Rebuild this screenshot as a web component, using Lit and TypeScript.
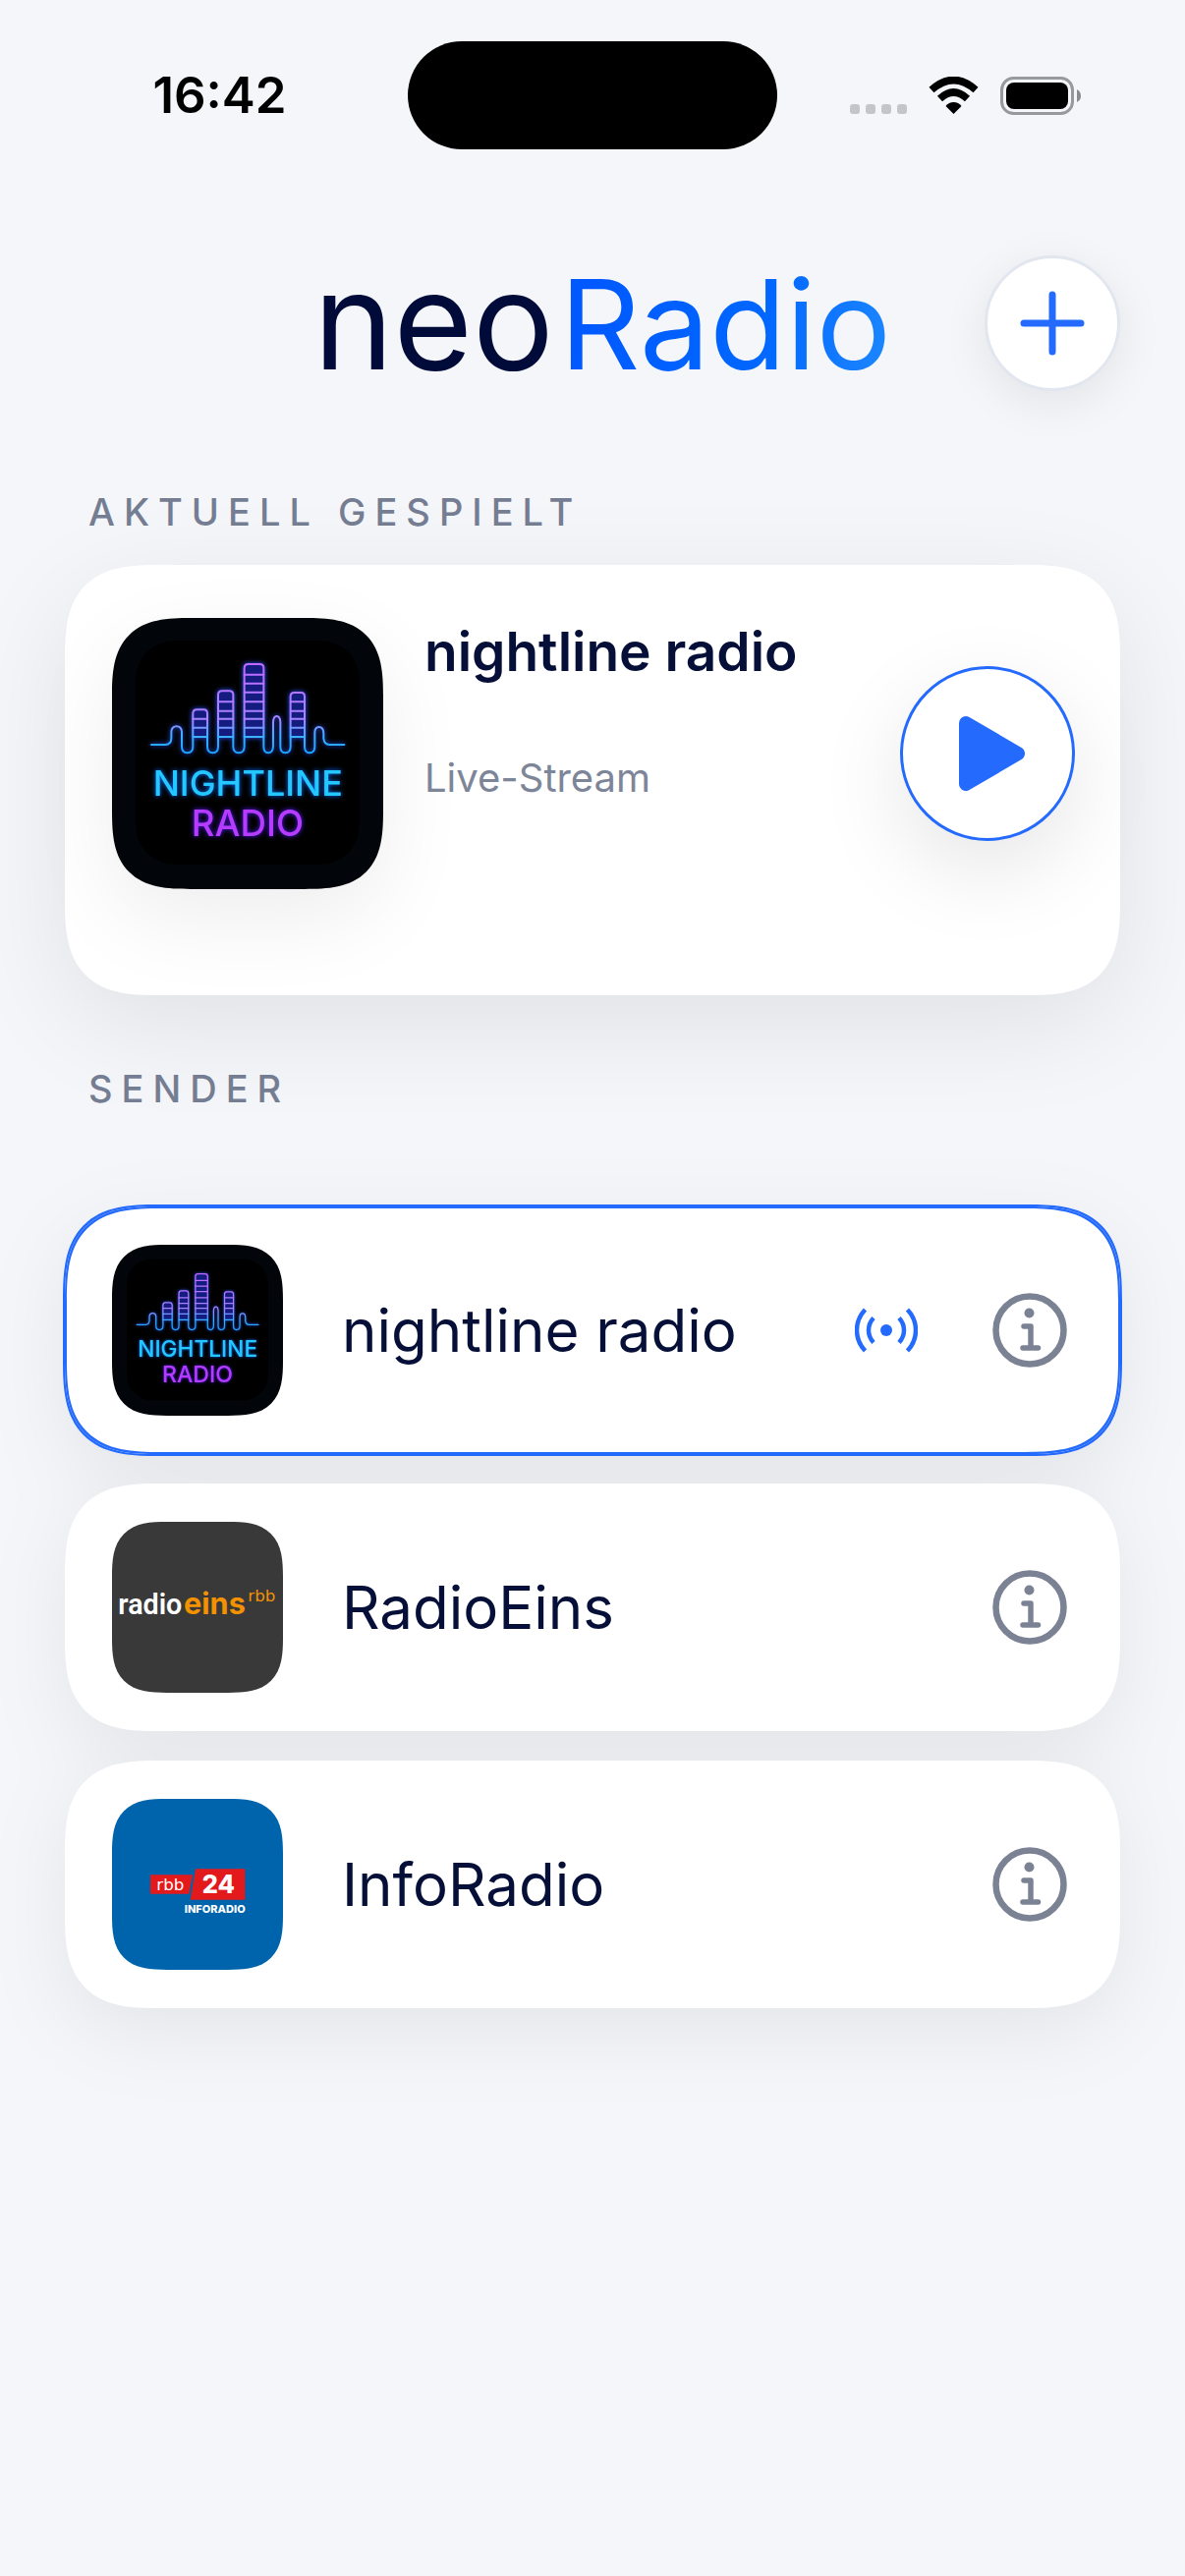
import { LitElement, html, css, svg, nothing } from 'lit';
import { customElement, property, state } from 'lit/decorators.js';
import { classMap } from 'lit/directives/class-map.js';

type ArtName = 'nightline' | 'radioeins' | 'inforadio';

interface Station {
  id: ArtName;
  name: string;
}

const STATIONS: Station[] = [
  { id: 'nightline', name: 'nightline radio' },
  { id: 'radioeins', name: 'RadioEins' },
  { id: 'inforadio', name: 'InfoRadio' },
];

// x, width and top of each striped equalizer bar
const BARS = [
  { x: 289, width: 44, top: 307 },
  { x: 366, width: 46, top: 250 },
  { x: 446, width: 59, top: 168 },
  { x: 587, width: 43, top: 255 },
];
const RUNGS = [200, 227, 254, 283, 311, 335, 362, 390];

/**
 * Cover art of a station, scales with its box
 */
@customElement('station-art')
export class StationArt extends LitElement {
  static styles = css`
    :host {
      display: block;
      overflow: hidden;
    }

    svg {
      display: block;
      width: 100%;
      height: 100%;
    }

    text {
      font-family: Inter, 'Liberation Sans', sans-serif;
    }

    .neon-blue {
      fill: #22c8ff;
      font-size: 108px;
      font-weight: 500;
      filter: drop-shadow(0 0 8px #0a6cff);
    }

    .neon-violet {
      fill: #b53cff;
      font-size: 110px;
      font-weight: 500;
      filter: drop-shadow(0 0 8px #5a1cff);
    }

    .wave {
      fill: none;
      stroke: url(#neon);
      stroke-width: 6;
      stroke-linecap: round;
    }

    .glow {
      filter: drop-shadow(0 0 8px #2a55ff);
    }

    .radio {
      fill: #fff;
      font-family: Roboto, 'Liberation Sans', sans-serif;
      font-size: 86px;
      font-weight: 600;
    }

    .eins {
      fill: #f39200;
      font-size: 92px;
      font-weight: 700;
    }

    .rbb {
      fill: #f39200;
      font-family: 'DejaVu Sans', sans-serif;
      font-size: 50px;
    }

    .white {
      fill: #fff;
    }

    .number {
      font-size: 76px;
      font-weight: 800;
    }

    .caption {
      font-size: 33px;
      font-weight: 800;
    }
  `;

  @property() name: ArtName = 'nightline';

  private _nightline() {
    return html`
      <svg viewBox="42 27 828 828" role="img" aria-label="nightline radio">
        <defs>
          <linearGradient id="neon" gradientUnits="userSpaceOnUse" x1="0" y1="168" x2="0" y2="430">
            <stop offset="0" stop-color="#c068ff" />
            <stop offset="0.65" stop-color="#a584ff" />
            <stop offset="0.85" stop-color="#38b0ff" />
            <stop offset="1" stop-color="#1ca4ff" />
          </linearGradient>
        </defs>
        <rect x="42" y="27" width="828" height="828" fill="#020509" />
        <rect x="114" y="96" width="684" height="684" rx="120" fill="#000" />
        <g class="glow">
          ${BARS.map(
            (bar) => svg`
              <rect x=${bar.x} y=${bar.top} width=${bar.width} height=${390 - bar.top} rx="10" fill="#151c80" />
              ${RUNGS.filter((y) => y > bar.top + 20).map(
                (y) => svg`<path class="wave" d="M${bar.x} ${y}h${bar.width}" />`
              )}
            `
          )}
          <path
            class="wave"
            d="M162 414H205Q222 414 223 395V375Q224 358 239 358Q254 358 255 375V420Q255 439 272 439Q289 439 289 420V320Q289 307 301 307H322Q333 307 333 320V420Q333 439 350 439Q366 439 366 420V262Q366 250 378 250H400Q412 250 412 262V420Q412 439 429 439Q446 439 446 420V180Q446 168 458 168H493Q505 168 505 180V420Q505 439 519 439Q533 439 534 420V345Q535 327 545 327Q555 327 556 345V420Q556 439 571 439Q587 439 587 420V267Q587 255 598 255H619Q630 255 630 267V420Q630 439 645 439Q661 439 661 420V378Q661 360 674 360Q687 360 688 378V395Q690 414 706 414H751"
          />
        </g>
        <text class="neon-blue" x="457" y="571" text-anchor="middle">NIGHTLINE</text>
        <text class="neon-violet" x="456" y="692" text-anchor="middle">RADIO</text>
      </svg>
    `;
  }

  private _radioeins() {
    return html`
      <svg viewBox="42 41 522 522" role="img" aria-label="radioeins rbb">
        <rect x="42" y="41" width="522" height="522" fill="#393939" />
        <text class="radio" x="61" y="324">radio</text>
        <text class="eins" x="261" y="324">eins</text>
        <text class="rbb" x="457" y="285">rbb</text>
      </svg>
    `;
  }

  private _inforadio() {
    return html`
      <svg viewBox="42 33 522 522" role="img" aria-label="rbb 24 Inforadio">
        <rect x="42" y="33" width="522" height="522" fill="#0064ac" />
        <path fill="#e31a1c" d="M159 265H288L277 323H159ZM297 247H448V341H281Z" />
        <text class="rbb white" x="220" y="312" text-anchor="middle">rbb</text>
        <text class="number white" x="367" y="321" text-anchor="middle">24</text>
        <text class="caption white" x="449" y="380" text-anchor="end">INFORADIO</text>
      </svg>
    `;
  }

  render() {
    switch (this.name) {
      case 'radioeins':
        return this._radioeins();
      case 'inforadio':
        return this._inforadio();
      default:
        return this._nightline();
    }
  }
}

/**
 * Status bar with the clock, the camera cutout and the system icons
 */
@customElement('status-bar')
export class StatusBar extends LitElement {
  static styles = css`
    :host {
      display: grid;
      grid-template-columns: 1fr auto 1fr;
      align-items: center;
      justify-items: center;
      padding: 42px 32px 0;
      color: #000;
    }

    .time {
      font-size: 51px;
      font-weight: 600;
      line-height: 60px;
    }

    .island {
      width: 376px;
      height: 110px;
      border-radius: 55px;
      background: #000;
    }

    .icons {
      display: flex;
      align-items: center;
      gap: 22px;
    }

    svg {
      display: block;
    }
  `;

  render() {
    return html`
      <time class="time">16:42</time>
      <div class="island"></div>
      <div class="icons">
        <svg width="58" height="38" viewBox="0 0 58 38" fill="#c4c5c9" aria-hidden="true">
          <rect y="28" width="10" height="10" rx="3" />
          <rect x="16" y="28" width="10" height="10" rx="3" />
          <rect x="32" y="28" width="10" height="10" rx="3" />
          <rect x="48" y="28" width="10" height="10" rx="3" />
        </svg>
        <svg width="51" height="38" viewBox="0 0 50 38" aria-hidden="true">
          <path d="M25 38L17 30Q20 26 25 26Q30 26 33 30Z" />
          <path d="M11 22.500Q25 9.500 39 22.500" fill="none" stroke="#000" stroke-width="7.500" />
          <path d="M2.500 13.500Q25 -6.500 47.500 13.500" fill="none" stroke="#000" stroke-width="7.500" />
        </svg>
        <svg width="83" height="39" viewBox="0 0 83 39" aria-hidden="true">
          <rect x="1.500" y="1.500" width="72" height="36" rx="12" fill="none" stroke="#98999b" stroke-width="3" />
          <rect x="6" y="6" width="63" height="27" rx="8" />
          <path d="M78 13Q82 15 82 19.500Q82 24 78 26Z" fill="#8b8b8d" />
        </svg>
      </div>
    `;
  }
}

@customElement('app-root')
export class AppRoot extends LitElement {
  static styles = css`
    :host {
      --ink: #050f38;
      --muted: #757d92;
      --accent: #246bfd;

      display: block;
      min-height: 100vh;
      box-sizing: border-box;
      overflow: hidden;
      background: #f4f6fa;
      color: var(--ink);
      font-family: Inter, 'Liberation Sans', sans-serif;
    }

    button {
      padding: 0;
      border: 0;
      background: none;
      color: inherit;
      font: inherit;
      text-align: left;
      cursor: pointer;
    }

    svg {
      display: block;
    }

    main {
      padding: 0 66px;
    }

    .brand {
      display: grid;
      grid-template-columns: 1fr auto 1fr;
      align-items: center;
      padding-top: 108px;
    }

    .logo {
      grid-column: 2;
      display: flex;
      align-items: baseline;
      gap: 6px;
      height: 138px;
      margin: 0;
      padding-left: 20px;
      font-size: 127px;
      font-weight: 400;
      line-height: 132px;
    }

    .logo-neo {
      font-size: 138px;
      color: #000b3a;
    }

    .logo-radio {
      background: linear-gradient(100deg, #0057ff, #0066ff 60%, #1e88ff);
      -webkit-background-clip: text;
      background-clip: text;
      color: transparent;
    }

    .add {
      display: grid;
      place-items: center;
      justify-self: end;
      box-sizing: border-box;
      width: 138px;
      height: 138px;
      border: 3px solid #e2e6ef;
      border-radius: 50%;
      background: #fff;
      box-shadow: 0 12px 48px rgba(0, 0, 0, 0.08);
    }

    .label {
      margin: 100px 24px 31px;
      color: var(--muted);
      font-size: 38px;
      font-weight: 500;
      line-height: 46px;
      letter-spacing: 9px;
      text-transform: uppercase;
    }

    .label-stations {
      margin: 72px 24px 97px;
    }

    .card {
      border-radius: 72px;
      background: #fff;
    }

    .now {
      display: flex;
      align-items: flex-start;
      gap: 42px;
      padding: 54px 46px 108px 48px;
      box-shadow: 0 30px 108px rgba(0, 0, 0, 0.085);
    }

    .now-art {
      width: 276px;
      height: 276px;
      border-radius: 60px;
      box-shadow: 0 30px 90px rgba(0, 0, 0, 0.07);
    }

    .now-text {
      flex: 1;
      display: flex;
      flex-direction: column;
      gap: 72px;
    }

    .now-title {
      margin: 0;
      font-size: 55px;
      font-weight: 600;
      line-height: 68px;
    }

    .now-sub {
      margin: 0;
      color: #7d8698;
      font-size: 40px;
      line-height: 46px;
    }

    .play {
      display: grid;
      place-items: center;
      align-self: center;
      box-sizing: border-box;
      width: 178px;
      height: 178px;
      border: 3px solid var(--accent);
      border-radius: 50%;
      background: #fff;
      box-shadow: 0 30px 90px rgba(0, 0, 0, 0.1);
    }

    .stations {
      display: flex;
      flex-direction: column;
      gap: 30px;
      margin: 0;
      padding: 0;
      list-style: none;
      filter: drop-shadow(0 24px 40px rgba(0, 0, 0, 0.065));
    }

    .station {
      display: flex;
      align-items: center;
      gap: 76px;
      padding: 39px 54px 39px 48px;
    }

    .station.active {
      box-shadow: 0 0 0 2px var(--accent), inset 0 0 0 2px var(--accent);
    }

    .pick {
      flex: 1;
      display: flex;
      align-items: center;
      gap: 60px;
      font-size: 60px;
      line-height: 78px;
    }

    .pick-art {
      width: 174px;
      height: 174px;
      border-radius: 42px;
    }

    /* continuous corners where the browser can draw them */
    @supports (corner-shape: superellipse(1.5)) {
      .card,
      .now-art,
      .pick-art {
        corner-shape: superellipse(1.5);
      }

      .card {
        border-radius: 96px;
      }

      .now-art {
        border-radius: 80px;
      }

      .pick-art {
        border-radius: 56px;
      }
    }
  `;

  @state() private _current: Station = STATIONS[0];

  private _select(station: Station) {
    this._current = station;
  }

  private _renderStation(station: Station) {
    const active = station === this._current;
    return html`
      <li class=${classMap({ card: true, station: true, active })}>
        <button class="pick" type="button" @click=${() => this._select(station)}>
          <station-art class="pick-art" name=${station.id}></station-art>
          <span>${station.name}</span>
        </button>
        ${active
          ? html`
              <svg width="64" height="46" viewBox="0 0 64 46" fill="none" stroke="#246bfd" stroke-width="4.500" aria-hidden="true">
                <circle cx="32" cy="23" r="6" fill="#246bfd" stroke="none" />
                <path d="M10.500 2Q2 11 2 23Q2 35 10.500 44M53.500 2Q62 11 62 23Q62 35 53.500 44" />
                <path d="M19 10.500Q14 16 14 23Q14 30 19 35.500M45 10.500Q50 16 50 23Q50 30 45 35.500" />
              </svg>
            `
          : nothing}
        <button class="info" type="button" aria-label="Info zu ${station.name}">
          <svg width="76" height="76" viewBox="0 0 76 76" fill="none" stroke="#7b8294" stroke-width="6.500" stroke-linecap="round" stroke-linejoin="round">
            <circle cx="38" cy="38" r="34.500" />
            <circle cx="37.500" cy="20.500" r="5" fill="#7b8294" stroke="none" />
            <path stroke-width="5.500" d="M32 34H39V56M31 56H46.500" />
          </svg>
        </button>
      </li>
    `;
  }

  render() {
    return html`
      <status-bar></status-bar>
      <main>
        <header class="brand">
          <h1 class="logo"><span class="logo-neo">neo</span><span class="logo-radio">Radio</span></h1>
          <button class="add" type="button" aria-label="Sender hinzufügen">
            <svg width="66" height="66" viewBox="0 0 66 66" stroke="#246bfd" stroke-width="7" stroke-linecap="round">
              <path d="M33 4V62M4 33H62" />
            </svg>
          </button>
        </header>

        <h2 class="label">Aktuell gespielt</h2>
        <section class="card now">
          <station-art class="now-art" name=${this._current.id}></station-art>
          <div class="now-text">
            <h3 class="now-title">${this._current.name}</h3>
            <p class="now-sub">Live-Stream</p>
          </div>
          <button class="play" type="button" aria-label="Abspielen">
            <svg width="76" height="76" viewBox="0 0 76 76" fill="#246bfd" stroke="#246bfd" stroke-width="14" stroke-linejoin="round">
              <path d="M16 7L69 38L16 69Z" />
            </svg>
          </button>
        </section>

        <h2 class="label label-stations">Sender</h2>
        <ul class="stations">
          ${STATIONS.map((station) => this._renderStation(station))}
        </ul>
      </main>
    `;
  }
}
